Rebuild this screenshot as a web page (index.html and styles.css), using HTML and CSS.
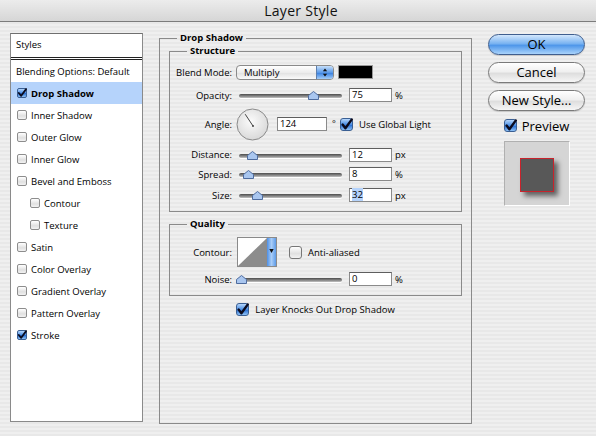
FILE: index.html
```html
<!DOCTYPE html>
<html>
<head>
<meta charset="utf-8">
<link rel="stylesheet" href="styles.css">
</head>
<body>
<div class="window">
  <div class="titlebar">Layer Style</div>
  <div class="main">
    <div class="styles-list">
      <div class="list-head">Styles</div>
      <div class="item plain">Blending Options: Default</div>
      <div class="item selected"><span class="cb sm on"><svg viewBox="0 0 11 11"><path d="M2 5.5 L4.6 8.6 L10 1.2"/></svg></span>Drop Shadow</div>
      <div class="item"><span class="cb sm"></span>Inner Shadow</div>
      <div class="item"><span class="cb sm"></span>Outer Glow</div>
      <div class="item"><span class="cb sm"></span>Inner Glow</div>
      <div class="item"><span class="cb sm"></span>Bevel and Emboss</div>
      <div class="item sub"><span class="cb sm"></span>Contour</div>
      <div class="item sub"><span class="cb sm"></span>Texture</div>
      <div class="item"><span class="cb sm"></span>Satin</div>
      <div class="item"><span class="cb sm"></span>Color Overlay</div>
      <div class="item"><span class="cb sm"></span>Gradient Overlay</div>
      <div class="item"><span class="cb sm"></span>Pattern Overlay</div>
      <div class="item"><span class="cb sm on"><svg viewBox="0 0 11 11"><path d="M2 5.5 L4.6 8.6 L10 1.2"/></svg></span>Stroke</div>
    </div>

    <fieldset class="panel">
      <legend>Drop Shadow</legend>
      <fieldset class="group structure">
        <legend>Structure</legend>
        <div class="row r-blend">
          <span class="lbl">Blend Mode:</span>
          <div class="select"><span class="sel-text">Multiply</span><span class="sel-btn"><svg viewBox="0 0 17 15"><path d="M8.5 3 L11 6.2 L6 6.2Z M8.5 12 L11 8.8 L6 8.8Z"/></svg></span></div>
          <span class="swatch"></span>
        </div>
        <div class="row r-opacity">
          <span class="lbl">Opacity:</span>
          <div class="slider"><span class="track"></span><span class="thumb" style="left:72px"><svg viewBox="0 0 11 9"><path d="M5.5 0.5 L10.5 4.5 L10.5 8.5 L0.5 8.5 L0.5 4.5Z"/></svg></span></div>
          <span class="field">75</span><span class="unit">%</span>
        </div>
        <div class="row r-angle">
          <span class="lbl">Angle:</span>
          <svg class="dial" viewBox="0 0 33 33"><defs><radialGradient id="dg" cx="45%" cy="40%" r="60%"><stop offset="0" stop-color="#fbfbfb"/><stop offset="1" stop-color="#d9d9d9"/></radialGradient></defs><circle cx="16.5" cy="16.5" r="15.5" fill="url(#dg)" stroke="#8a8a8a"/><line x1="17" y1="18" x2="9.2" y2="6.2" stroke="#444" stroke-width="1"/><circle cx="17" cy="18" r="1" fill="#444"/></svg>
          <span class="field angle-field">124</span><span class="deg">°</span>
          <span class="cb lg on"><svg viewBox="0 0 13 13"><path d="M2.6 6.6 L5.4 10.2 L11.8 1.4"/></svg></span><span class="cb-label">Use Global Light</span>
        </div>
        <div class="row r-distance">
          <span class="lbl">Distance:</span>
          <div class="slider"><span class="track"></span><span class="thumb" style="left:11px"><svg viewBox="0 0 11 9"><path d="M5.5 0.5 L10.5 4.5 L10.5 8.5 L0.5 8.5 L0.5 4.5Z"/></svg></span></div>
          <span class="field">12</span><span class="unit">px</span>
        </div>
        <div class="row r-spread">
          <span class="lbl">Spread:</span>
          <div class="slider"><span class="track"></span><span class="thumb" style="left:7px"><svg viewBox="0 0 11 9"><path d="M5.5 0.5 L10.5 4.5 L10.5 8.5 L0.5 8.5 L0.5 4.5Z"/></svg></span></div>
          <span class="field">8</span><span class="unit">%</span>
        </div>
        <div class="row r-size">
          <span class="lbl">Size:</span>
          <div class="slider"><span class="track"></span><span class="thumb" style="left:16px"><svg viewBox="0 0 11 9"><path d="M5.5 0.5 L10.5 4.5 L10.5 8.5 L0.5 8.5 L0.5 4.5Z"/></svg></span></div>
          <span class="field"><span class="hl">32</span></span><span class="unit">px</span>
        </div>
      </fieldset>

      <fieldset class="group quality">
        <legend>Quality</legend>
        <div class="row r-contour">
          <span class="lbl">Contour:</span>
          <svg class="contour" viewBox="0 0 40 30"><defs><linearGradient id="cg" x1="0" y1="0" x2="1" y2="0"><stop offset="0" stop-color="#4d8fe6"/><stop offset="0.5" stop-color="#a9cdf7"/><stop offset="1" stop-color="#5d9be8"/></linearGradient></defs><rect x="0.5" y="0.5" width="39" height="29" fill="#fff" stroke="#8a8a8a"/><path d="M1 29 L30 1 L30 29Z" fill="#8c8c8c"/><rect x="30" y="1" width="9" height="28" fill="url(#cg)"/><path d="M32.3 12 L36.7 12 L34.5 16Z" fill="#111"/></svg>
          <span class="cb lg"></span><span class="cb-label">Anti-aliased</span>
        </div>
        <div class="row r-noise">
          <span class="lbl">Noise:</span>
          <div class="slider"><span class="track"></span><span class="thumb" style="left:0px"><svg viewBox="0 0 11 9"><path d="M5.5 0.5 L10.5 4.5 L10.5 8.5 L0.5 8.5 L0.5 4.5Z"/></svg></span></div>
          <span class="field">0</span><span class="unit">%</span>
        </div>
      </fieldset>

      <div class="knock">
        <span class="cb lg on"><svg viewBox="0 0 13 13"><path d="M2.6 6.6 L5.4 10.2 L11.8 1.4"/></svg></span><span class="cb-label">Layer Knocks Out Drop Shadow</span>
      </div>
    </fieldset>

    <div class="side">
      <div class="btn default">OK</div>
      <div class="btn">Cancel</div>
      <div class="btn">New Style...</div>
      <div class="preview-check"><span class="cb lg on"><svg viewBox="0 0 13 13"><path d="M2.6 6.6 L5.4 10.2 L11.8 1.4"/></svg></span><span class="pv-label">Preview</span></div>
      <div class="preview-box"><div class="preview-square"></div></div>
    </div>
  </div>
</div>
</body>
</html>
```
FILE: styles.css
```css
* { box-sizing: border-box; }
html, body { margin: 0; padding: 0; }
body {
  width: 596px;
  height: 436px;
  overflow: hidden;
  font-family: "Open Sans", "DejaVu Sans", sans-serif;
  font-size: 9.5px;
  color: #000;
}
.window {
  width: 596px;
  height: 436px;
  background: repeating-linear-gradient(to bottom, #efefef 0 2px, #e8e8e8 2px 4px);
}
.titlebar {
  height: 22px;
  background: linear-gradient(to bottom, #ececec, #d6d6d6);
  border-bottom: 1px solid #7c7c7c;
  text-align: center;
  font-size: 14px;
  letter-spacing: 0.3px;
  line-height: 21px;
  color: #111;
  padding-left: 6px;
}
.main {
  display: flex;
  align-items: flex-start;
  padding-left: 10px;
}

/* left list */
.styles-list {
  margin-top: 11px;
  width: 133px;
  height: 389px;
  background: #fff;
  border: 1px solid #8a8a8a;
  border-top-color: #6f6f6f;
}
.list-head {
  height: 26px;
  padding-left: 5px;
  line-height: 22px;
  border-bottom: 3px double #222;
}
.item {
  height: 22px;
  display: flex;
  align-items: center;
  padding-left: 6px;
  white-space: nowrap;
}
.item.plain { padding-left: 5px; }
.item.sub { padding-left: 19px; }
.item.selected { background: #b5d3fb; font-weight: bold; }
.item .cb { margin-right: 4px; }

/* checkboxes */
.cb {
  display: inline-block;
  flex: none;
  border: 1px solid #8d8d8d;
  border-radius: 2px;
  background: linear-gradient(to bottom, #ffffff, #e0e0e0 60%, #f2f2f2);
  position: relative;
}
.cb.sm { width: 10px; height: 10px; }
.cb.lg { width: 13px; height: 13px; border-radius: 3px; border-color: #777; }
.cb.on {
  background: linear-gradient(to bottom, #b6d6fb, #4a8fe6 50%, #2a6fd3 55%, #8ec2f7);
  border-color: #3a5f93;
}
.cb svg { position: absolute; left: -1px; top: -1px; width: calc(100% + 2px); height: calc(100% + 2px); overflow: visible; }
.cb svg path { fill: none; stroke: #0b0b1e; stroke-width: 2; stroke-linecap: round; stroke-linejoin: round; }
.cb.lg svg path { stroke-width: 2.4; }

/* middle panel */
fieldset { margin: 0; min-width: 0; }
legend { font-weight: bold; line-height: 12px; padding: 0 3px; }
.panel {
  margin-top: 10px;
  margin-left: 16px;
  width: 313px;
  height: 392px;
  border: 1px solid #8a8a8a;
  padding: 1px 9px 0;
}
.panel > legend { margin-left: 8px; }
.group {
  border: 1px solid #8a8a8a;
  padding: 7px 0 9px;
}
.group > legend { margin-left: 17px; }
.quality { margin-top: 6px; }

.row { display: flex; align-items: center; }
.lbl { width: 62px; text-align: right; margin-right: 4px; flex: none; white-space: nowrap; }
.r-blend { height: 16px; }
.r-opacity { height: 14px; margin-top: 8px; }
.r-angle { height: 34px; margin-top: 5px; }
.r-distance { height: 15px; margin-top: 6px; }
.r-spread { height: 14px; margin-top: 5px; }
.r-size { height: 14px; margin-top: 7px; }
.r-contour { height: 30px; }
.r-noise { height: 14px; margin-top: 5px; }

.select {
  width: 98px;
  height: 15px;
  border: 1px solid #8a8a8a;
  border-radius: 4px;
  background: linear-gradient(to bottom, #ffffff, #ececec 50%, #e2e2e2 55%, #fafafa);
  display: flex;
  overflow: hidden;
}
.sel-text { flex: 1; padding-left: 7px; line-height: 13px; }
.sel-btn {
  width: 17px;
  background: linear-gradient(to bottom, #c7e0fb, #5b9ae8 50%, #3c82e0 55%, #a3cdf8);
  border-left: 1px solid #5d7fae;
}
.sel-btn svg { display: block; width: 16px; height: 13px; }
.sel-btn svg path { fill: #111; }
.swatch {
  width: 35px;
  height: 14px;
  margin-left: 4px;
  background: #000;
  border: 1px solid #9a9a9a;
}

.slider {
  position: relative;
  width: 106px;
  height: 14px;
  margin-left: 0;
}
.track {
  position: absolute;
  left: 3px;
  right: 0;
  top: 6px;
  height: 4px;
  border-radius: 2px;
  background: linear-gradient(to bottom, #4b4b4b, #8c8c8c 60%, #c4c4c4);
  box-shadow: 0 1px 0 #fff;
}
.thumb {
  position: absolute;
  top: 3px;
  width: 11px;
  height: 9px;
}
.thumb svg { display: block; width: 11px; height: 9px; }
.thumb svg path { fill: #a9c6ef; stroke: #4f6c9e; stroke-width: 1; }

.field {
  width: 43px;
  height: 14px;
  margin-left: 7px;
  background: #fff;
  border: 1px solid #8a8a8a;
  border-top-color: #5e5e5e;
  padding-left: 2px;
  line-height: 12px;
  flex: none;
}
.hl { background: #b5d3fb; }
.unit { margin-left: 3px; }
.dial { width: 33px; height: 33px; flex: none; }
.angle-field { width: 50px; margin-left: 8px; }
.deg { margin-left: 5px; width: 4px; font-size: 9px; align-self: flex-start; margin-top: 10px; }
.r-angle .cb { margin-left: 4px; }
.cb-label { margin-left: 6px; white-space: nowrap; }
.contour { width: 40px; height: 30px; flex: none; margin-left: 1px; }
.r-contour .cb { margin-left: 12px; }

.knock {
  margin-top: 7px;
  height: 13px;
  display: flex;
  align-items: center;
  justify-content: center;
}

/* right side */
.side {
  margin-top: 12px;
  margin-left: 16px;
  width: 97px;
  display: flex;
  flex-direction: column;
  align-items: center;
}
.btn {
  width: 97px;
  height: 21px;
  border-radius: 11px;
  border: 1px solid #7a7a7a;
  background: linear-gradient(to bottom, #ffffff, #f0f0f0 45%, #dedede 55%, #f6f6f6);
  text-align: center;
  font-size: 13px;
  line-height: 19px;
  margin-bottom: 7px;
  box-shadow: 0 1px 1px rgba(0,0,0,0.15);
}
.btn.default {
  background: linear-gradient(to bottom, #d3e7fc, #79b3f1 45%, #4f97ea 55%, #a9d3fb);
  border-color: #3f5e8e;
}
.preview-check {
  display: flex;
  align-items: center;
  margin-top: 1px;
  height: 13px;
}
.pv-label { margin-left: 5px; font-size: 13px; }
.preview-box {
  margin-top: 9px;
  width: 66px;
  height: 65px;
  background: #d5d5d5;
  border: 1px solid #b0b0b0;
  border-right-color: #fff;
  border-bottom-color: #fff;
  padding: 16px 0 0 15px;
}
.preview-square {
  width: 34px;
  height: 34px;
  background: #585858;
  border: 1px solid #c8232c;
  box-shadow: 4px 4px 5px rgba(0,0,0,0.55);
}
```
